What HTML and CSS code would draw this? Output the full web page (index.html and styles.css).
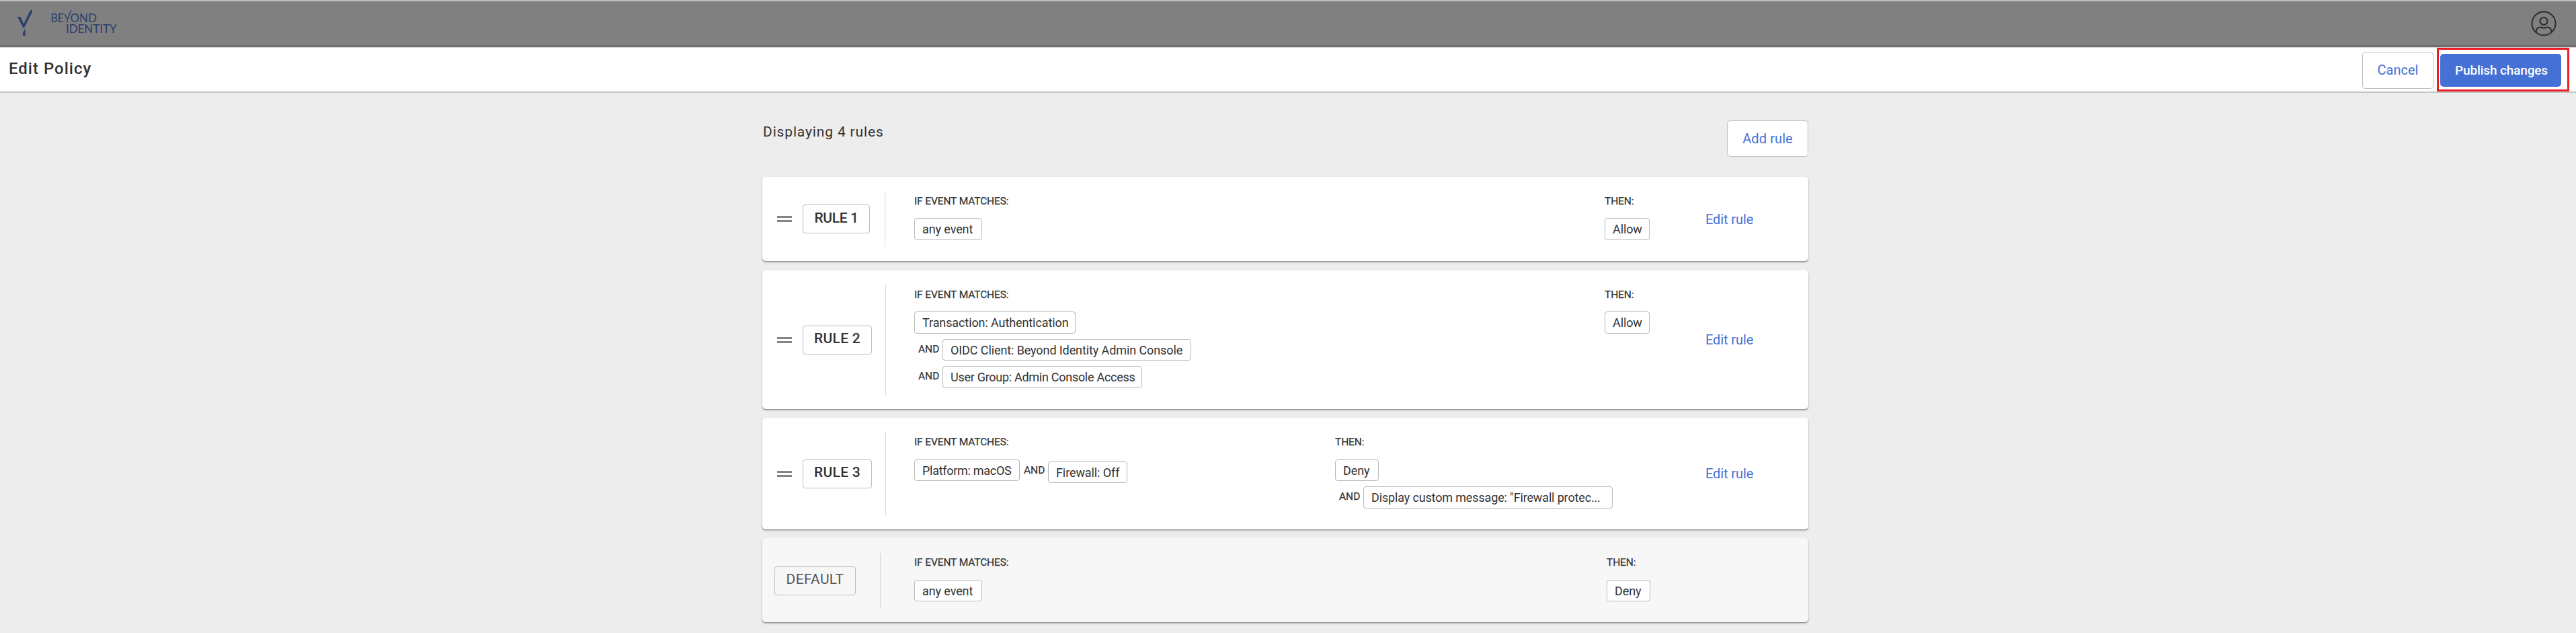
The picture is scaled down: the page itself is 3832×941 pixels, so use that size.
FILE: index.html
```
<!DOCTYPE html>
<html lang="en">
<head>
<meta charset="utf-8">
<title>Edit Policy</title>
<link rel="stylesheet" href="styles.css">
</head>
<body>
<header class="topbar">
  <svg class="logo" width="160" height="62" viewBox="0 0 160 62" role="img" aria-label="Beyond Identity">
    <path d="M2 22H6.2L11.3 32.5L20.6 13.2L21.6 12H24V14.5L12 38.2H10.4Z"/>
    <path d="M13.6 39V50H9.9V46.6Z"/>
    <g class="wordmark">
      <text x="51.5" y="30.3" textLength="19.5" lengthAdjust="spacingAndGlyphs">BE</text>
      <text x="80.5" y="30.3" textLength="39.5" lengthAdjust="spacingAndGlyphs">OND</text>
      <text x="74" y="46.3" textLength="75.5" lengthAdjust="spacingAndGlyphs">IDENTITY</text>
    </g>
    <path class="thin" d="M72.4 18L76.2 26L82 12.3M75.8 27.2V30.4"/>
  </svg>
  <svg class="avatar" width="38" height="38" viewBox="0 0 38 38" aria-label="Account">
    <circle cx="19" cy="19" r="17.5"/>
    <circle cx="19" cy="15.4" r="5.5"/>
    <path d="M7.8 32.3V30.2C8.1 26.4 10.6 24.4 14 24.5C16 24.6 17 25.5 19 25.5S22 24.6 24 24.5C27.4 24.4 29.9 26.4 30.2 30.2V32.3"/>
  </svg>
</header>

<section class="titlebar">
  <h1 class="title">Edit Policy</h1>
  <div class="actions">
    <button class="btn btn-cancel">Cancel</button>
    <div class="highlight"><button class="btn btn-publish">Publish changes</button></div>
  </div>
</section>

<main class="content">
  <div class="summary">
    <p class="count">Displaying 4 rules</p>
    <button class="btn btn-add">Add rule</button>
  </div>

  <article class="card">
    <div class="lead">
      <span class="handle"></span><span class="tag tag-narrow">RULE 1</span><span class="divider"></span>
    </div>
    <div class="col col-if">
      <h2 class="label">IF EVENT MATCHES:</h2>
      <div class="line"><span class="chip w-any">any event</span></div>
    </div>
    <div class="col col-then">
      <h2 class="label">THEN:</h2>
      <div class="line"><span class="chip w-allow">Allow</span></div>
    </div>
    <a class="edit">Edit rule</a>
  </article>

  <article class="card">
    <div class="lead">
      <span class="handle"></span><span class="tag">RULE 2</span><span class="divider"></span>
    </div>
    <div class="col col-if">
      <h2 class="label">IF EVENT MATCHES:</h2>
      <div class="line"><span class="chip w-transaction">Transaction: Authentication</span></div>
      <div class="line"><span class="and">AND</span><span class="chip w-client">OIDC Client: Beyond Identity Admin Console</span></div>
      <div class="line"><span class="and">AND</span><span class="chip w-group snug">User Group: Admin Console Access</span></div>
    </div>
    <div class="col col-then">
      <h2 class="label">THEN:</h2>
      <div class="line"><span class="chip w-allow">Allow</span></div>
    </div>
    <a class="edit">Edit rule</a>
  </article>

  <article class="card">
    <div class="lead">
      <span class="handle"></span><span class="tag">RULE 3</span><span class="divider"></span>
    </div>
    <div class="col col-if col-if-short">
      <h2 class="label">IF EVENT MATCHES:</h2>
      <div class="line"><span class="chip w-platform snug">Platform: macOS</span><span class="and and-inline">AND</span><span class="chip w-firewall chip-low">Firewall: Off</span></div>
    </div>
    <div class="col col-then">
      <h2 class="label">THEN:</h2>
      <div class="line"><span class="chip w-deny">Deny</span></div>
      <div class="line"><span class="and">AND</span><span class="chip w-message">Display custom message: "Firewall protec...</span></div>
    </div>
    <a class="edit">Edit rule</a>
  </article>

  <article class="card card-default">
    <div class="lead">
      <span class="tag tag-default">DEFAULT</span><span class="divider"></span>
    </div>
    <div class="col col-if col-if-default">
      <h2 class="label">IF EVENT MATCHES:</h2>
      <div class="line"><span class="chip w-any">any event</span></div>
    </div>
    <div class="col col-then">
      <h2 class="label">THEN:</h2>
      <div class="line"><span class="chip w-deny">Deny</span></div>
    </div>
  </article>
</main>
</body>
</html>
```
FILE: styles.css
```
* { box-sizing: border-box; }

body {
  margin: 0;
  min-height: 941px;
  background: #ededed;
  color: #333;
  font-family: Roboto, "Liberation Sans", sans-serif;
}

h1, h2, p { margin: 0; }

/* Top bar */
.topbar {
  display: flex;
  justify-content: space-between;
  height: 71px;
  padding: 1px 29px 0 24px;
  background: #808080;
  border-top: 2px solid #bfbfbf;
  border-bottom: 1px solid #d4d4d4;
  box-shadow: inset 0 -3px 0 #6e6e6e;
}
.logo { fill: #2a3f6e; }
.wordmark { font: 400 17px Lato, sans-serif; }
.thin { fill: none; stroke: #2a3f6e; stroke-width: 1.4; }
.avatar {
  margin-top: 13px;
  fill: none;
  stroke: #2b2b2b;
  stroke-width: 2;
}

/* Title bar */
.titlebar {
  display: flex;
  justify-content: space-between;
  height: 67px;
  padding: 0 10px 0 13px;
  background: #fff;
  border-bottom: 2px solid #c6c6c6;
}
.title {
  font-size: 24px;
  font-weight: 500;
  line-height: 62px;
  letter-spacing: 1px;
}
.actions { display: flex; gap: 5px; }
.highlight {
  width: 197px;
  height: 65px;
  padding: 6px 9px 4px 2px;
  border: 3px solid #ed1c24;
}

.btn {
  display: block;
  padding: 0;
  border: 1px solid #bdbdbd;
  border-radius: 5px;
  background: #fff;
  color: #4571d6;
  font: 400 20px/1 Roboto, "Liberation Sans", sans-serif;
}
.btn-cancel {
  width: 106px;
  height: 55px;
  margin-top: 6px;
  padding-bottom: 2px;
}
.btn-publish {
  width: 180px;
  height: 49px;
  border: 0;
  background: #4571d6;
  color: #fff;
  font-size: 19px;
  font-weight: 500;
  letter-spacing: -0.15px;
  padding-left: 2px;
}
.btn-add {
  width: 121px;
  height: 54px;
  padding-bottom: 1px;
  letter-spacing: 0.1px;
}

/* Rule list */
.content {
  display: flex;
  flex-direction: column;
  gap: 13.6px;
  width: 1556px;
  margin: 41px 0 0 1134px;
}
.summary {
  display: flex;
  justify-content: space-between;
  height: 70.4px;
}
.count {
  padding-left: 1px;
  font-size: 21px;
  line-height: 35px;
  letter-spacing: 0.85px;
}

.card {
  display: flex;
  padding: 22px 0 21px;
  background: #fff;
  border-radius: 5px;
  box-shadow: 0 1px 1px #8a8a8a, 0 2px 3px rgba(0, 0, 0, 0.22);
}
.card-default { background: #f7f7f7; }

.lead {
  display: flex;
  align-items: center;
  width: 226px;
  padding-left: 22px;
}
.card-default .lead { padding-left: 18px; }
.handle {
  width: 22px;
  height: 9px;
  margin-right: 16px;
  border: solid #858585;
  border-width: 3px 0;
}
.tag {
  width: 103px;
  height: 43px;
  border: 1px solid #bdbdbd;
  border-radius: 4px;
  font-size: 21px;
  font-weight: 500;
  line-height: 36px;
  letter-spacing: 0.3px;
  text-align: center;
}
.tag-narrow { width: 100px; line-height: 38px; letter-spacing: -0.4px; }
.tag-default {
  width: 121px;
  color: #555;
  font-weight: 400;
}
.divider {
  align-self: stretch;
  width: 1px;
  margin-left: 20px;
  background: #d6d6d6;
}
.tag-narrow + .divider { margin-left: 22px; }
.tag-default + .divider { margin-left: 36px; }

.col {
  display: flex;
  flex-direction: column;
  gap: 8px;
  padding-bottom: 10px;
}
.col-if { width: 1027px; }
.col-if-short { width: 626px; }
.col-if-default { width: 1030px; }
.col-then { flex: 1; }

.label {
  height: 27px;
  margin-bottom: 4.5px;
  font-size: 15.5px;
  font-weight: 400;
  line-height: 29px;
  letter-spacing: -0.12px;
  -webkit-text-stroke: 0.25px #333;
}
.line { display: flex; height: 32.5px; }
.and {
  width: 42px;
  padding-left: 6px;
  font-size: 15.5px;
  font-weight: 400;
  line-height: 30px;
  -webkit-text-stroke: 0.25px #333;
}
.and-inline { line-height: 33px; }
.chip {
  height: 32.5px;
  padding-left: 11px;
  background: #fff;
  border: 1px solid #b8b8b8;
  border-radius: 4px;
  font-size: 18px;
  line-height: 31px;
  letter-spacing: -0.1px;
  white-space: nowrap;
}
.chip-low { margin-top: 3px; margin-bottom: -3px; }
.snug { letter-spacing: -0.28px; }

.w-any { width: 101px; }
.w-allow { width: 67px; }
.w-deny { width: 65px; }
.w-transaction { width: 240px; }
.w-client { width: 370px; }
.w-group { width: 297px; }
.w-platform { width: 157px; }
.w-firewall { width: 118px; }
.w-message { width: 371px; letter-spacing: -0.15px; }

.edit {
  align-self: center;
  width: 153px;
  color: #4571d6;
  font-size: 20px;
  line-height: 24px;
  letter-spacing: -0.1px;
}
```
